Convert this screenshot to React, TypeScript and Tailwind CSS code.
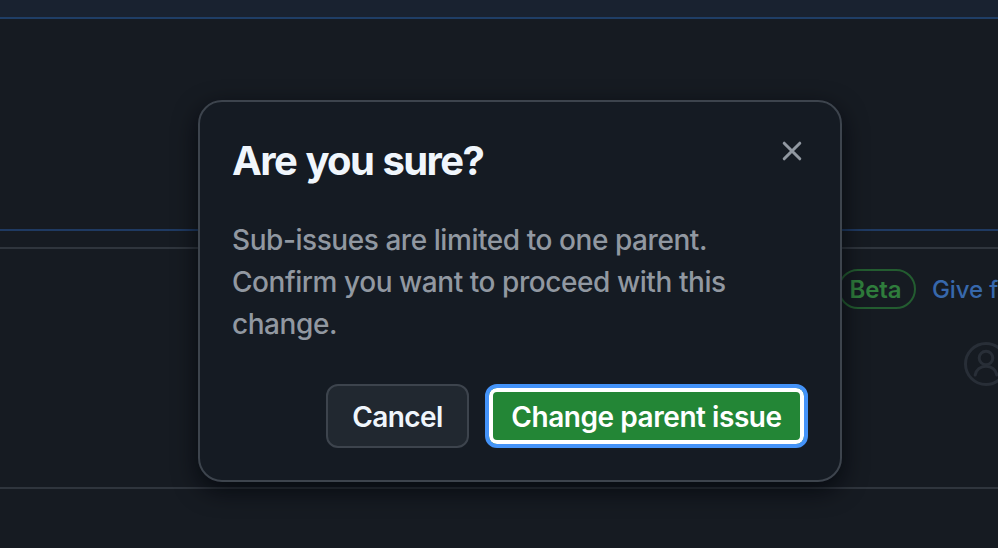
function CloseIcon() {
  return (
    <svg width="20" height="20" viewBox="0 0 20 20" fill="none" stroke="currentColor" strokeWidth="3" strokeLinecap="round">
      <path d="M2.2 2.2l15.6 15.6M17.8 2.2L2.2 17.8" />
    </svg>
  );
}

function PersonIcon() {
  return (
    <svg className="shrink-0" width="44" height="44" viewBox="0 0 44 44" fill="none" strokeWidth="3">
      <circle cx="22" cy="22" r="20.5" />
      <circle cx="22" cy="16" r="6.8" />
      <path d="M11.2 33a10.9 10.2 0 0 1 21.6 0" strokeLinecap="round" />
    </svg>
  );
}

function ConfirmDialog() {
  return (
    <div
      role="dialog"
      aria-labelledby="confirm-title"
      className="absolute top-[100px] left-[198px] flex h-[382px] w-[644px] flex-col rounded-[24px] border-2 border-[#3d444d] bg-[#151b23] px-8 pb-8 shadow-[0_8px_24px_0_rgba(1,4,9,0.75)]"
    >
      <div className="flex items-start justify-between pt-[35px]">
        <h1 id="confirm-title" className="text-[40px] leading-[48px] font-bold tracking-[-1.65px] whitespace-nowrap text-[#f0f6fc] [word-spacing:1.5px]">
          Are you sure?
        </h1>
        <button aria-label="Close" className="mt-1 mr-[6px] text-[#9198a1]">
          <CloseIcon />
        </button>
      </div>

      <p className="mt-[34px] text-[28px] leading-[42px] font-[450] tracking-[-0.44px] whitespace-nowrap text-[#9198a1]">
        Sub-issues are limited to one parent.
        <br />
        Confirm you want to proceed with this
        <br />
        change.
      </p>

      <div className="mt-auto flex justify-end gap-4">
        <button className="h-16 w-[143px] rounded-[12px] border-2 border-[#3d444d] bg-[#212830] pt-[2px] text-[28px] font-semibold tracking-[-0.6px] whitespace-nowrap text-[#f0f6fc]">
          Cancel
        </button>
        <button className="h-16 w-[323px] rounded-[12px] border-4 border-[#4493f8] bg-[#238636] pt-[2px] text-[28px] font-semibold tracking-[-0.45px] whitespace-nowrap text-white shadow-[inset_0_0_0_4px_#ffffff]">
          Change parent issue
        </button>
      </div>
    </div>
  );
}

export default function App() {
  return (
    <div className="relative h-[548px] w-[998px] overflow-hidden bg-[#161b22] font-['Inter','Liberation_Sans',sans-serif]">
      <div className="h-[19px] border-b-2 border-[#1f3e66] bg-[#192230]" />
      <div className="h-[212px] border-b-2 border-[#1f3a62]" />

      {/* Issue section behind the dialog */}
      <div className="mt-4 h-[242px] border-y-2 border-[#2f353d]">
        <div className="ml-[838px] flex items-center gap-[16px] pt-5">
          <span className="flex h-10 w-[78px] shrink-0 items-center justify-center rounded-full border-2 border-[#235c30] pt-[2px] pr-[3px] text-[24px] font-semibold tracking-[-0.1px] text-[#2f7d3c]">
            Beta
          </span>
          <span className="pt-[2px] text-[24px] font-[450] tracking-[-0.1px] whitespace-nowrap text-[#3768ac]">Give feedback</span>
        </div>
        <div className="mt-[33px] ml-[964px] flex stroke-[#282e37]">
          <PersonIcon />
        </div>
      </div>

      <ConfirmDialog />
    </div>
  );
}
